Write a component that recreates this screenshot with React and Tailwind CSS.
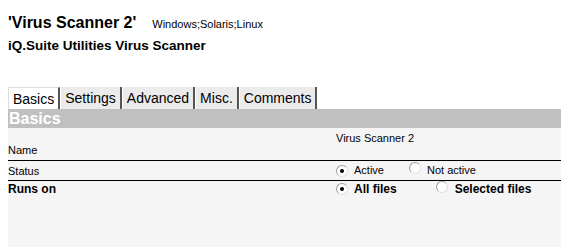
const tabs = ["Basics", "Settings", "Advanced", "Misc.", "Comments"];

const Radio = ({ checked }) => (
  <span className="inline-block w-[12px] h-[12px] rounded-full bg-white border border-[#a0a0a0] border-r-[#e0e0e0] border-b-[#e0e0e0] relative shrink-0">
    {checked && (
      <span className="absolute left-[3px] top-[3px] w-[4px] h-[4px] rounded-full bg-black" />
    )}
  </span>
);

const App = () => {
  return (
    <div className="w-[561px] h-[248px] bg-white font-['Liberation_Sans',Arial,sans-serif] text-black overflow-hidden">
      <div className="pl-[8px] pt-[13px] flex items-baseline">
        <span className="text-[16px] font-bold leading-[20px]">'Virus Scanner 2'</span>
        <span className="ml-[16px] text-[11px]">Windows;Solaris;Linux</span>
      </div>
      <div className="pl-[8px] pt-[5px] text-[13.5px] font-bold leading-[16px]">
        iQ.Suite Utilities Virus Scanner
      </div>
      <div className="mt-[33px] pl-[8px] flex h-[22px] items-end">
        {tabs.map((t, i) => (
          <div
            key={t}
            className={`h-[22px] px-[4px] mr-[1px] text-[14px] leading-[22px] border-r-2 border-[#555] ${
              i === 0 ? "bg-white border-l border-l-[#ddd] border-t border-t-[#ddd]" : "bg-[#ebebeb]"
            }`}
          >
            {t}
          </div>
        ))}
      </div>
      <div className="ml-[8px] h-[138px] bg-[#f5f5f5]">
        <div className="h-[19px] bg-[#c0c0c0] text-white font-bold text-[16px] leading-[19px] pl-[1px]">
          Basics
        </div>
        <div className="flex h-[33px] text-[11px] border-b border-black">
          <div className="w-[328px] pt-[14px]">Name</div>
          <div className="pt-[2px]">Virus Scanner 2</div>
        </div>
        <div className="flex h-[20px] text-[11px] border-b border-black items-center">
          <div className="w-[328px] pt-[1px]">Status</div>
          <div className="flex items-center">
            <Radio checked />
            <span className="ml-[6px]">Active</span>
            <span className="ml-[25px]"><Radio /></span>
            <span className="ml-[6px]">Not active</span>
          </div>
        </div>
        <div className="flex h-[16px] text-[12px] font-bold items-center">
          <div className="w-[328px]">Runs on</div>
          <div className="flex items-center">
            <Radio checked />
            <span className="ml-[6px]">All files</span>
            <span className="ml-[39px]"><Radio /></span>
            <span className="ml-[7px]">Selected files</span>
          </div>
        </div>
      </div>
    </div>
  );
};

export default App;
